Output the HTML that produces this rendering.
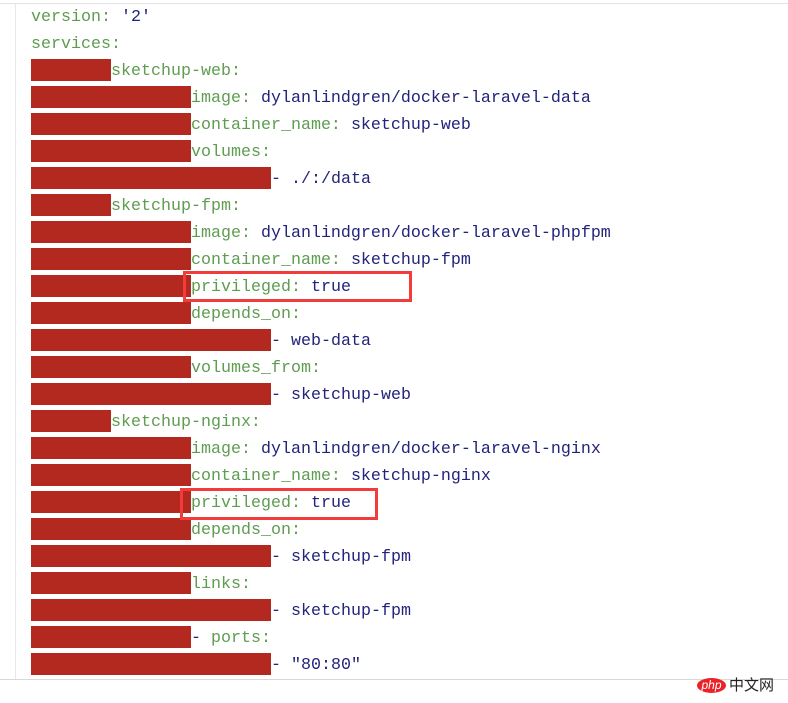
<!DOCTYPE html>
<html><head><meta charset="utf-8"><style>
html,body{margin:0;padding:0;background:#fff;width:788px;height:703px;overflow:hidden;position:relative}
.top{position:absolute;left:0;top:3px;width:788px;height:1px;background:#e2e2e2}
.vl{position:absolute;left:15px;top:3px;width:1px;height:677px;background:#e8e8e8}
.bot{position:absolute;left:0;top:679px;width:788px;height:1px;background:#d8d8d8}
.row{position:absolute;left:31px;height:27px;line-height:25px;font-family:"Liberation Mono",monospace;font-size:16.67px;white-space:pre;color:#5e9c50}
.row span.r{display:inline-block;background:#b3291f;height:22px;vertical-align:top;margin-top:0px}
.v{color:#22237a}
.box{position:absolute;border:3px solid #f23b3b;box-sizing:border-box}
</style></head><body>
<div class="top"></div><div class="vl"></div><div class="bot"></div>
<div class="row" style="top:5px">version: <span class="v">'2'</span></div>
<div class="row" style="top:32px">services:</div>
<div class="row" style="top:59px"><span class="r" style="width:80px"></span>sketchup-web:</div>
<div class="row" style="top:86px"><span class="r" style="width:160px"></span>image: <span class="v">dylanlindgren/docker-laravel-data</span></div>
<div class="row" style="top:113px"><span class="r" style="width:160px"></span>container_name: <span class="v">sketchup-web</span></div>
<div class="row" style="top:140px"><span class="r" style="width:160px"></span>volumes:</div>
<div class="row" style="top:167px"><span class="r" style="width:240px"></span><span class="v">- ./:/data</span></div>
<div class="row" style="top:194px"><span class="r" style="width:80px"></span>sketchup-fpm:</div>
<div class="row" style="top:221px"><span class="r" style="width:160px"></span>image: <span class="v">dylanlindgren/docker-laravel-phpfpm</span></div>
<div class="row" style="top:248px"><span class="r" style="width:160px"></span>container_name: <span class="v">sketchup-fpm</span></div>
<div class="row" style="top:275px"><span class="r" style="width:160px"></span>privileged: <span class="v">true</span></div>
<div class="row" style="top:302px"><span class="r" style="width:160px"></span>depends_on:</div>
<div class="row" style="top:329px"><span class="r" style="width:240px"></span><span class="v">- web-data</span></div>
<div class="row" style="top:356px"><span class="r" style="width:160px"></span>volumes_from:</div>
<div class="row" style="top:383px"><span class="r" style="width:240px"></span><span class="v">- sketchup-web</span></div>
<div class="row" style="top:410px"><span class="r" style="width:80px"></span>sketchup-nginx:</div>
<div class="row" style="top:437px"><span class="r" style="width:160px"></span>image: <span class="v">dylanlindgren/docker-laravel-nginx</span></div>
<div class="row" style="top:464px"><span class="r" style="width:160px"></span>container_name: <span class="v">sketchup-nginx</span></div>
<div class="row" style="top:491px"><span class="r" style="width:160px"></span>privileged: <span class="v">true</span></div>
<div class="row" style="top:518px"><span class="r" style="width:160px"></span>depends_on:</div>
<div class="row" style="top:545px"><span class="r" style="width:240px"></span><span class="v">- sketchup-fpm</span></div>
<div class="row" style="top:572px"><span class="r" style="width:160px"></span>links:</div>
<div class="row" style="top:599px"><span class="r" style="width:240px"></span><span class="v">- sketchup-fpm</span></div>
<div class="row" style="top:626px"><span class="r" style="width:160px"></span><span class="v">- </span>ports:</div>
<div class="row" style="top:653px"><span class="r" style="width:240px"></span><span class="v">- "80:80"</span></div>
<div class="box" style="left:183px;top:271px;width:229px;height:31px"></div>
<div class="box" style="left:180px;top:488px;width:198px;height:32px"></div>
<div style="position:absolute;left:697px;top:678px;width:29px;height:15px;border-radius:50%;background:#e8232a;color:#fff;font:italic 12px/15px 'Liberation Sans',sans-serif;text-align:center">php</div>
<div style="position:absolute;left:729px;top:676px;font:15px/18px 'Noto Sans CJK SC',sans-serif;color:#222">中文网</div>
</body></html>
